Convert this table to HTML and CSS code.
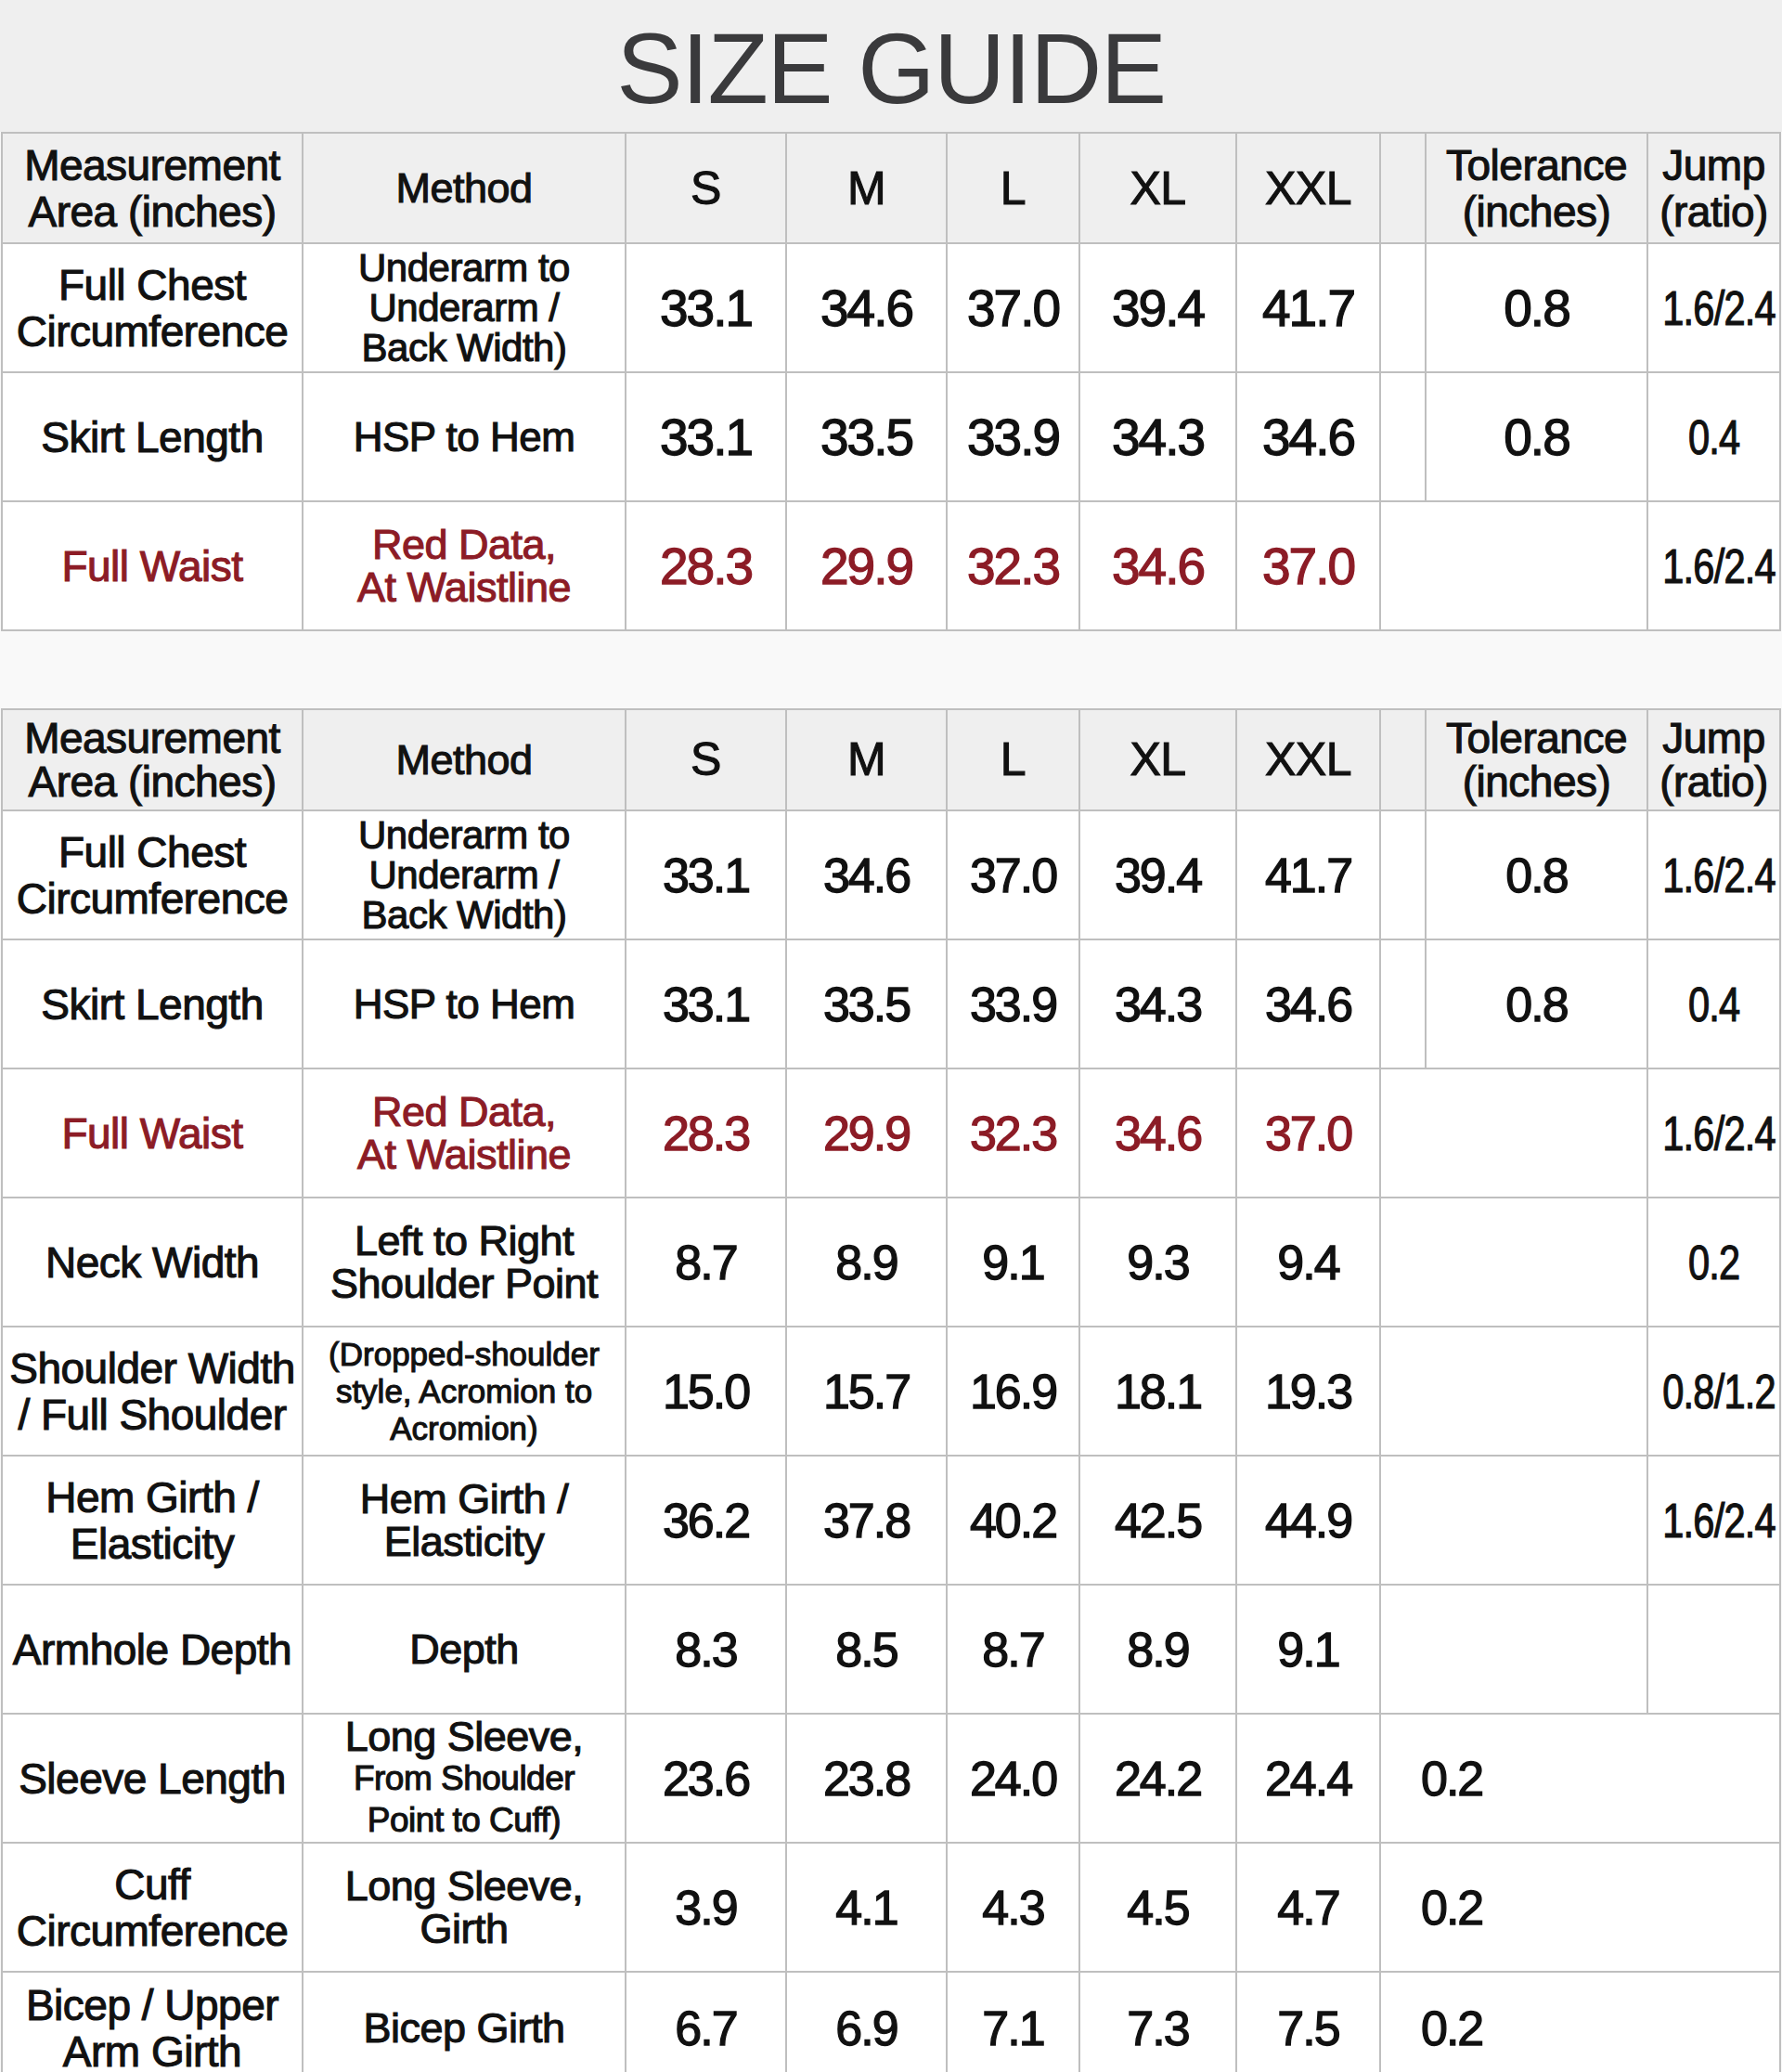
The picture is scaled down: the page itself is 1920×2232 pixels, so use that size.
FILE: index.html
```html
<!DOCTYPE html>
<html lang="en">
<head>
<meta charset="utf-8">
<title>Size Guide</title>
<link rel="stylesheet" href="styles.css">
</head>
<body>
<div class="page">
  <h1 class="title">SIZE GUIDE</h1>

  <table class="chart chart-short">
    <colgroup>
      <col class="c-area"><col class="c-method"><col class="c-s"><col class="c-m"><col class="c-l"><col class="c-xl"><col class="c-xxl"><col class="c-gap"><col class="c-tol"><col class="c-jump">
    </colgroup>
    <tr class="head">
      <th>Measurement<br>Area (inches)</th>
      <th class="method">Method</th>
      <th class="size">S</th><th class="size">M</th><th class="size">L</th><th class="size">XL</th><th class="size">XXL</th>
      <th></th>
      <th>Tolerance<br>(inches)</th>
      <th>Jump<br>(ratio)</th>
    </tr>
    <tr>
      <td class="area">Full Chest<br>Circumference</td>
      <td class="method tight">Underarm to<br>Underarm /<br>Back Width)</td>
      <td class="num">33.1</td><td class="num">34.6</td><td class="num">37.0</td><td class="num">39.4</td><td class="num">41.7</td>
      <td></td>
      <td class="num">0.8</td>
      <td class="jump"><span class="cond">1.6/2.4</span></td>
    </tr>
    <tr>
      <td class="area">Skirt Length</td>
      <td class="method short">HSP to Hem</td>
      <td class="num">33.1</td><td class="num">33.5</td><td class="num">33.9</td><td class="num">34.3</td><td class="num">34.6</td>
      <td></td>
      <td class="num">0.8</td>
      <td class="jump"><span class="cond">0.4</span></td>
    </tr>
    <tr class="red">
      <td class="area">Full Waist</td>
      <td class="method">Red Data,<br>At Waistline</td>
      <td class="num">28.3</td><td class="num">29.9</td><td class="num">32.3</td><td class="num">34.6</td><td class="num">37.0</td>
      <td colspan="2"></td>
      <td class="jump"><span class="cond">1.6/2.4</span></td>
    </tr>
  </table>

  <table class="chart chart-full">
    <colgroup>
      <col class="c-area"><col class="c-method"><col class="c-s"><col class="c-m"><col class="c-l"><col class="c-xl"><col class="c-xxl"><col class="c-gap"><col class="c-tol"><col class="c-jump">
    </colgroup>
    <tr class="head">
      <th>Measurement<br>Area (inches)</th>
      <th class="method">Method</th>
      <th class="size">S</th><th class="size">M</th><th class="size">L</th><th class="size">XL</th><th class="size">XXL</th>
      <th></th>
      <th>Tolerance<br>(inches)</th>
      <th>Jump<br>(ratio)</th>
    </tr>
    <tr>
      <td class="area">Full Chest<br>Circumference</td>
      <td class="method tight">Underarm to<br>Underarm /<br>Back Width)</td>
      <td class="num">33.1</td><td class="num">34.6</td><td class="num">37.0</td><td class="num">39.4</td><td class="num">41.7</td>
      <td></td>
      <td class="num">0.8</td>
      <td class="jump"><span class="cond">1.6/2.4</span></td>
    </tr>
    <tr>
      <td class="area">Skirt Length</td>
      <td class="method short">HSP to Hem</td>
      <td class="num">33.1</td><td class="num">33.5</td><td class="num">33.9</td><td class="num">34.3</td><td class="num">34.6</td>
      <td></td>
      <td class="num">0.8</td>
      <td class="jump"><span class="cond">0.4</span></td>
    </tr>
    <tr class="red">
      <td class="area">Full Waist</td>
      <td class="method">Red Data,<br>At Waistline</td>
      <td class="num">28.3</td><td class="num">29.9</td><td class="num">32.3</td><td class="num">34.6</td><td class="num">37.0</td>
      <td colspan="2"></td>
      <td class="jump"><span class="cond">1.6/2.4</span></td>
    </tr>
    <tr>
      <td class="area">Neck Width</td>
      <td class="method">Left to Right<br>Shoulder Point</td>
      <td class="num">8.7</td><td class="num">8.9</td><td class="num">9.1</td><td class="num">9.3</td><td class="num">9.4</td>
      <td colspan="2"></td>
      <td class="jump"><span class="cond">0.2</span></td>
    </tr>
    <tr>
      <td class="area">Shoulder Width<br>/ Full Shoulder</td>
      <td class="method small">(Dropped-shoulder<br>style, Acromion to<br>Acromion)</td>
      <td class="num">15.0</td><td class="num">15.7</td><td class="num">16.9</td><td class="num">18.1</td><td class="num">19.3</td>
      <td colspan="2"></td>
      <td class="jump"><span class="cond">0.8/1.2</span></td>
    </tr>
    <tr>
      <td class="area">Hem Girth /<br>Elasticity</td>
      <td class="method">Hem Girth /<br>Elasticity</td>
      <td class="num">36.2</td><td class="num">37.8</td><td class="num">40.2</td><td class="num">42.5</td><td class="num">44.9</td>
      <td colspan="2"></td>
      <td class="jump"><span class="cond">1.6/2.4</span></td>
    </tr>
    <tr>
      <td class="area">Armhole Depth</td>
      <td class="method">Depth</td>
      <td class="num">8.3</td><td class="num">8.5</td><td class="num">8.7</td><td class="num">8.9</td><td class="num">9.1</td>
      <td colspan="2"></td>
      <td></td>
    </tr>
    <tr>
      <td class="area">Sleeve Length</td>
      <td class="method mixed">Long Sleeve,<br><span class="sub">From Shoulder<br>Point to Cuff)</span></td>
      <td class="num">23.6</td><td class="num">23.8</td><td class="num">24.0</td><td class="num">24.2</td><td class="num">24.4</td>
      <td colspan="3" class="num lead">0.2</td>
    </tr>
    <tr>
      <td class="area">Cuff<br>Circumference</td>
      <td class="method">Long Sleeve,<br>Girth</td>
      <td class="num">3.9</td><td class="num">4.1</td><td class="num">4.3</td><td class="num">4.5</td><td class="num">4.7</td>
      <td colspan="3" class="num lead">0.2</td>
    </tr>
    <tr class="last">
      <td class="area">Bicep / Upper<br>Arm Girth</td>
      <td class="method">Bicep Girth</td>
      <td class="num">6.7</td><td class="num">6.9</td><td class="num">7.1</td><td class="num">7.3</td><td class="num">7.5</td>
      <td colspan="3" class="num lead">0.2</td>
    </tr>
  </table>
</div>
</body>
</html>
```

FILE: styles.css
```css
html, body {
  margin: 0;
  padding: 0;
  width: 1920px;
  height: 2232px;
  overflow: hidden;
  background: #f9f9f9;
}

.page {
  padding: 0 1px;
  font-family: "Liberation Sans", Arial, sans-serif;
  color: #111;
}

.title {
  margin: 0 -1px;
  height: 142px;
  box-sizing: border-box;
  padding-top: 21px;
  background: #efefef;
  text-align: center;
  font-family: "Liberation Sans", Arial, sans-serif;
  font-weight: normal;
  font-size: 107px;
  line-height: 107px;
  letter-spacing: -1.5px;
  color: #3a3a3c;
}

.chart {
  border-collapse: collapse;
  table-layout: fixed;
  width: 1918px;
  background: #fff;
}

.chart-full {
  margin-top: 83px;
}

.c-area { width: 324px; }
.c-method { width: 348px; }
.c-s { width: 173px; }
.c-m { width: 173px; }
.c-l { width: 143px; }
.c-xl { width: 169px; }
.c-xxl { width: 155px; }
.c-gap { width: 49px; }
.c-tol { width: 239px; }
.c-jump { width: 143px; }

.chart th,
.chart td {
  border: 2px solid #bfbfbf;
  padding: 0 2px;
  text-align: center;
  vertical-align: middle;
  font-weight: normal;
  font-size: 46px;
  line-height: 50px;
  letter-spacing: -0.5px;
  -webkit-text-stroke: 1.1px currentColor;
  white-space: nowrap;
}

.chart .head th {
  background: #efefef;
}

.chart-short .head { height: 119px; }
.chart-full .head { height: 109px; }
.chart-full .head th { line-height: 47px; }

.chart tr { height: 139px; }
.chart tr.last { height: 122px; }

.chart .size {
  font-size: 50px;
}

.chart .method {
  font-size: 45px;
  line-height: 46px;
}

.chart .method.short {
  font-size: 44px;
}

.chart .method.tight {
  font-size: 42px;
  line-height: 43px;
}

.chart .method.small {
  font-size: 35px;
  line-height: 40px;
  letter-spacing: 0;
}

.chart .method.mixed {
  line-height: 42px;
}

.chart .sub {
  font-size: 37px;
}

.chart .num {
  font-size: 55px;
  letter-spacing: -2px;
  -webkit-text-stroke: 1.3px currentColor;
}

.chart-full .num {
  font-size: 52px;
}

.chart .jump {
  padding: 0;
  font-size: 52px;
  letter-spacing: -1px;
  -webkit-text-stroke: 1.2px currentColor;
}

.chart .cond {
  display: inline-block;
  transform: scaleX(0.8);
}

.chart .lead {
  text-align: left;
  padding-left: 43px;
}

.chart .red td {
  color: #8c1c26;
}

.chart .red td.jump {
  color: #111;
}
```
